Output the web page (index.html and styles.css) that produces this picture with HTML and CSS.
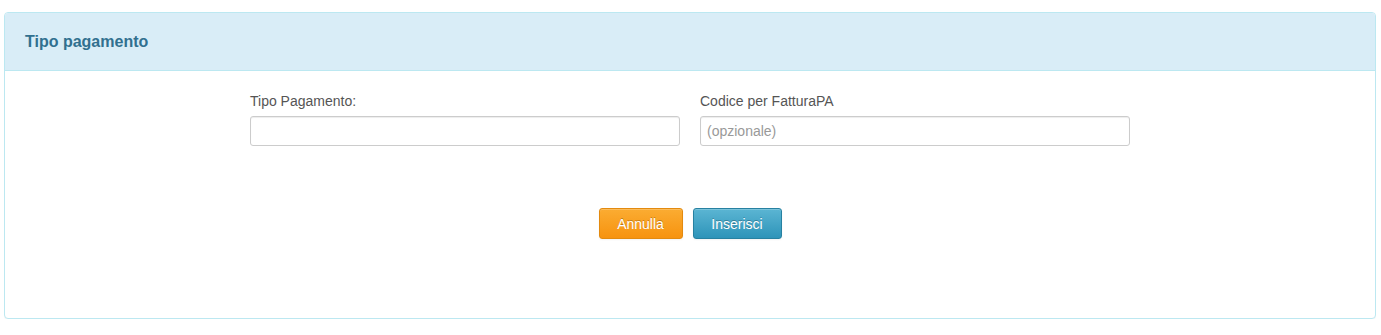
FILE: index.html
```html
<!doctype html>
<html lang="it">
  <head>
    <meta charset="UTF-8" />
    <title>Tipo pagamento</title>
    <link rel="stylesheet" href="styles.css">
  </head>
  <body>
    <div class="page">
      <div class="panel">
        <div class="panel-heading">
          <h3>Tipo pagamento</h3>
        </div>
        <div class="panel-body">
          <form class="form-row">
            <div class="field">
              <label for="tipo">Tipo Pagamento:</label>
              <input type="text" id="tipo">
            </div>
            <div class="field">
              <label for="codice">Codice per FatturaPA</label>
              <input type="text" id="codice" placeholder="(opzionale)">
            </div>
          </form>
          <div class="actions">
            <button class="btn btn-warning">Annulla</button>
            <button class="btn btn-info">Inserisci</button>
          </div>
        </div>
      </div>
    </div>
  </body>
</html>
```

FILE: styles.css
```css
* {
  margin: 0;
  padding: 0;
  box-sizing: border-box;
}

body {
  font-family: 'Liberation Sans', Arial, Helvetica, sans-serif;
  font-size: 14px;
  color: #555;
  background: #fff;
}

.page {
  padding: 12px 5px 0 4px;
}

.panel {
  border: 1px solid #bce8f1;
  border-radius: 4px;
  background: #fff;
  height: 307px;
  box-shadow: 0 1px 1px rgba(0,0,0,0.03);
}

.panel-heading {
  background: #d9edf7;
  border-bottom: 1px solid #bce8f1;
  border-radius: 3px 3px 0 0;
  height: 58px;
  padding: 19px 20px 0 20px;
}

.panel-heading h3 {
  font-size: 16px;
  font-weight: bold;
  color: #31708f;
  line-height: 20px;
}

.panel-body {
  padding-top: 22px;
}

.form-row {
  display: flex;
  justify-content: center;
  gap: 20px;
}

.field {
  width: 430px;
}

.field label {
  display: block;
  font-size: 14px;
  line-height: 16px;
  color: #555;
  margin-bottom: 7px;
}

.field input {
  display: block;
  width: 100%;
  height: 30px;
  border: 1px solid #ccc;
  border-radius: 3px;
  padding: 4px 6px;
  font-family: inherit;
  font-size: 14px;
  color: #555;
  box-shadow: inset 0 1px 1px rgba(0,0,0,0.075);
}

.field input::placeholder {
  color: #999;
}

.actions {
  display: flex;
  justify-content: center;
  gap: 10px;
  margin-top: 62px;
}

.btn {
  height: 31px;
  padding: 0;
  border-radius: 3px;
  font-family: inherit;
  font-size: 14px;
  color: #fff;
  cursor: pointer;
  text-shadow: 0 -1px 0 rgba(0,0,0,0.25);
  box-shadow: inset 0 1px 0 rgba(255,255,255,0.2), 0 1px 2px rgba(0,0,0,0.05);
}

.btn-warning {
  width: 84px;
  background: linear-gradient(#fbac32, #f7930f);
  border: 1px solid #e38a0f;
}

.btn-info {
  width: 89px;
  background: linear-gradient(#5bb5d3, #2e94b9);
  border: 1px solid #2781a1;
}
```
